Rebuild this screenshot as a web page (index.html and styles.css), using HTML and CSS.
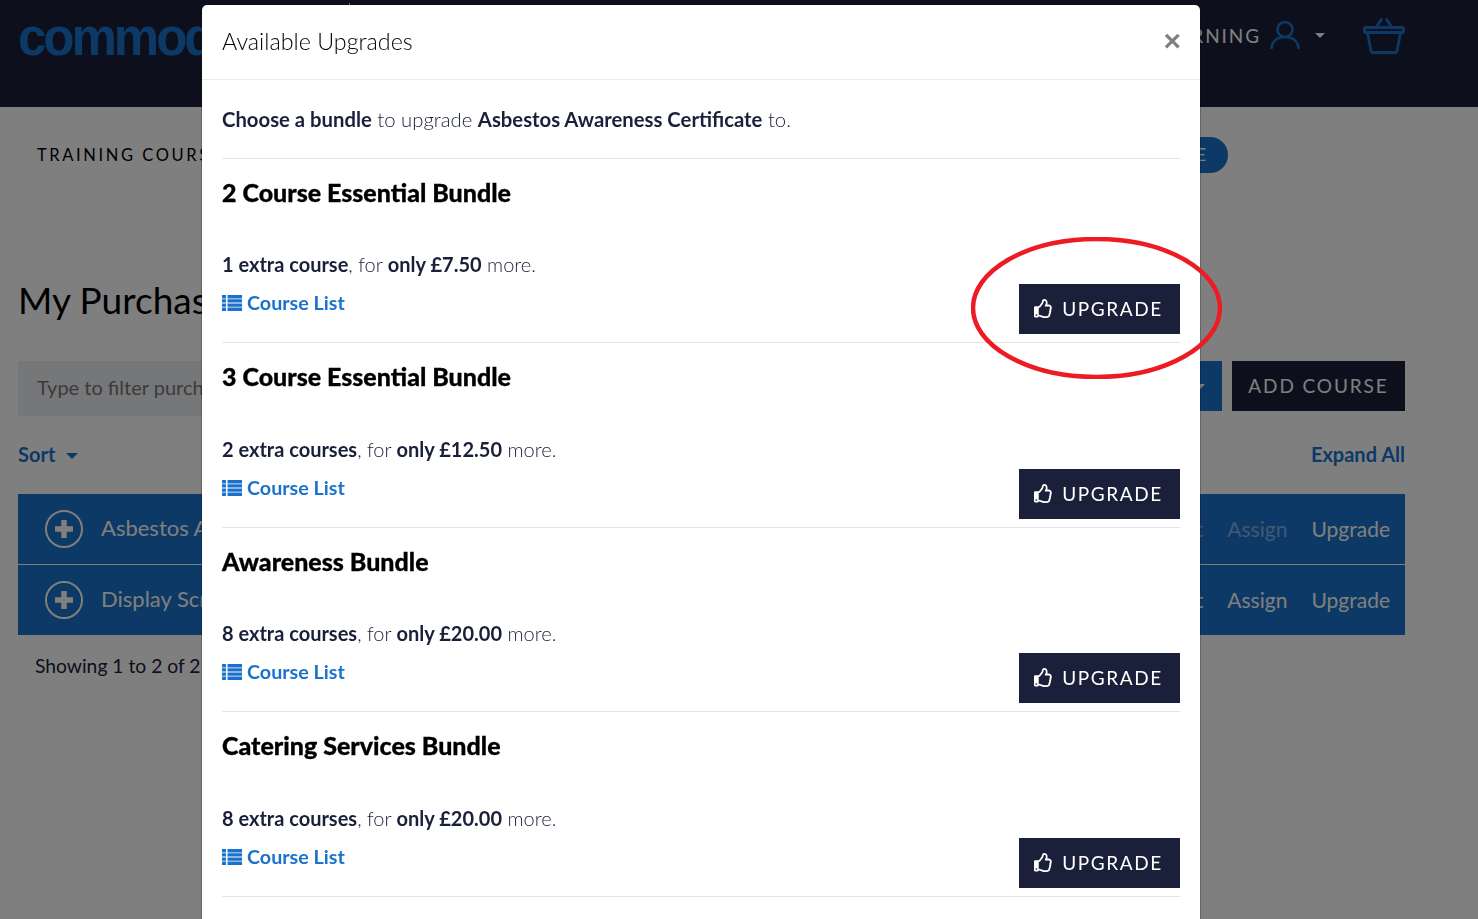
FILE: index.html
```html
<!DOCTYPE html>
<html lang="en">
<head>
<meta charset="utf-8">
<title>My Purchases</title>
<link rel="stylesheet" href="styles.css">
</head>
<body>
<svg class="defs" width="0" height="0">
  <symbol id="thumb" viewBox="0 0 512 512"><path fill="#fff" d="M466.27 286.69C475.04 271.84 480 256 480 236.85c0-44.015-37.218-85.58-85.82-85.58H357.7c4.92-12.81 8.85-28.13 8.85-46.54C366.55 31.936 328.86 0 271.28 0c-61.607 0-58.093 94.933-71.76 108.6-22.747 22.747-49.615 66.447-68.76 83.4H32c-17.673 0-32 14.327-32 32v240c0 17.673 14.327 32 32 32h64c14.893 0 27.408-10.174 30.978-23.95 44.509 1.001 75.06 39.94 177.802 39.94 7.22 0 15.22.01 22.22.01 77.117 0 111.986-39.423 112.94-95.33 13.319-18.425 20.299-43.122 17.34-66.99 9.854-18.451 13.664-40.343 8.99-62.99zm-61.75 53.83c12.56 21.13 1.26 49.41-13.94 57.57 7.7 48.78-17.608 65.9-53.12 65.9h-37.82c-71.639 0-118.029-37.82-171.64-37.82V240h10.92c28.36 0 67.98-70.89 94.54-97.46 28.36-28.36 18.91-75.63 37.82-94.54 47.27 0 47.27 32.98 47.27 56.73 0 39.17-28.36 56.72-28.36 94.54h103.99c21.11 0 37.73 18.91 37.82 37.82.09 18.9-12.82 37.81-21.79 37.81 12.67 13.67 15.39 42.44-3.89 57.72zM88 432c0 13.255-10.745 24-24 24s-24-10.745-24-24 10.745-24 24-24 24 10.745 24 24z"/></symbol>
  <symbol id="list" viewBox="0 0 20 16"><path fill="#1a72cc" d="M0 0h4v3.400H0zM5.500 0H20v3.400H5.500zM0 4.200h4v3.400H0zM5.500 4.200H20v3.400H5.500zM0 8.400h4v3.400H0zM5.500 8.400H20v3.400H5.500zM0 12.600h4V16H0zM5.500 12.600H20V16H5.500z"/></symbol>
  <symbol id="plus" viewBox="0 0 38 38"><circle cx="19" cy="19" r="18" fill="none" stroke="#fff" stroke-width="2"/><path d="M19 10v18M10 19h18" stroke="#fff" stroke-width="5.500"/></symbol>
</svg>
<div class="page">
  <header class="topbar">
    <span class="tick"></span>
    <div class="logo">commodus</div>
    <div class="top-right">
      <span class="top-link">MY LEARNING</span>
      <svg class="user-icon" viewBox="0 0 30 30" width="30" height="30" fill="none" stroke="#1a72cc" stroke-width="2.600"><circle cx="15" cy="9.500" r="7.500"/><path d="M1.500 29c0-7 5-12 13.500-12s13.500 5 13.500 12"/></svg>
      <span class="caret caret-light"></span>
      <svg class="basket-icon" viewBox="0 0 42 37" width="42" height="37" fill="none" stroke="#1a72cc" stroke-width="2.800"><path d="M12 12 19 1.500M30 12 23 1.500"/><rect x="1.500" y="10.500" width="39" height="5" rx="1"/><path d="M4.500 16 8 34c.2 1 1 1.500 2 1.500h22c1 0 1.800-.5 2-1.500l3.500-18"/></svg>
    </div>
  </header>
  <nav class="subnav">
    <span class="subnav-link">TRAINING COURSES</span>
    <span class="pill">MANAGE</span>
  </nav>
  <h1 class="page-title">My Purchases</h1>
  <div class="filter-row">
    <div class="filter-input">Type to filter purchases</div>
    <div class="blue-btn"><span class="caret caret-light"></span></div>
    <div class="add-btn">ADD COURSE</div>
  </div>
  <div class="sort-row">
    <span class="sort">Sort <span class="caret caret-blue"></span></span>
    <span class="expand">Expand All</span>
  </div>
  <div class="course-table">
    <div class="course-row">
      <svg class="plus" width="38" height="38"><use href="#plus"/></svg>
      <span class="course-name">Asbestos Awareness Certificate</span>
      <span class="action action-off">Report</span>
      <span class="action action-off">Assign</span>
      <span class="action">Upgrade</span>
    </div>
    <div class="course-row">
      <svg class="plus" width="38" height="38"><use href="#plus"/></svg>
      <span class="course-name">Display Screen Equipment</span>
      <span class="action">Report</span>
      <span class="action">Assign</span>
      <span class="action">Upgrade</span>
    </div>
  </div>
  <p class="showing">Showing 1 to 2 of 2</p>
</div>

<div class="backdrop"></div>

<div class="modal">
  <div class="modal-head">
    <h2 class="modal-title">Available Upgrades</h2>
    <span class="close">×</span>
  </div>
  <div class="modal-body">
    <p class="intro"><b>Choose a bundle</b> to upgrade <b>Asbestos Awareness Certificate</b> to.</p>

    <section class="bundle">
      <h3 class="bundle-title">2 Course Essential Bundle</h3>
      <div class="bundle-foot">
        <div>
          <p class="offer"><b>1 extra course</b>, for <b>only £7.50</b> more.</p>
          <a class="course-list"><svg class="list-icon" width="20" height="16"><use href="#list"/></svg>Course List</a>
        </div>
        <button class="upgrade"><svg class="thumb" width="19" height="19"><use href="#thumb"/></svg>UPGRADE</button>
      </div>
    </section>

    <section class="bundle">
      <h3 class="bundle-title">3 Course Essential Bundle</h3>
      <div class="bundle-foot">
        <div>
          <p class="offer"><b>2 extra courses</b>, for <b>only £12.50</b> more.</p>
          <a class="course-list"><svg class="list-icon" width="20" height="16"><use href="#list"/></svg>Course List</a>
        </div>
        <button class="upgrade"><svg class="thumb" width="19" height="19"><use href="#thumb"/></svg>UPGRADE</button>
      </div>
    </section>

    <section class="bundle">
      <h3 class="bundle-title">Awareness Bundle</h3>
      <div class="bundle-foot">
        <div>
          <p class="offer"><b>8 extra courses</b>, for <b>only £20.00</b> more.</p>
          <a class="course-list"><svg class="list-icon" width="20" height="16"><use href="#list"/></svg>Course List</a>
        </div>
        <button class="upgrade"><svg class="thumb" width="19" height="19"><use href="#thumb"/></svg>UPGRADE</button>
      </div>
    </section>

    <section class="bundle">
      <h3 class="bundle-title">Catering Services Bundle</h3>
      <div class="bundle-foot">
        <div>
          <p class="offer"><b>8 extra courses</b>, for <b>only £20.00</b> more.</p>
          <a class="course-list"><svg class="list-icon" width="20" height="16"><use href="#list"/></svg>Course List</a>
        </div>
        <button class="upgrade"><svg class="thumb" width="19" height="19"><use href="#thumb"/></svg>UPGRADE</button>
      </div>
    </section>
  </div>
</div>

<svg class="annotation" viewBox="0 0 251 142" width="251" height="142" fill="none"><ellipse cx="125.500" cy="71" rx="123.500" ry="69" stroke="#ed1c24" stroke-width="4.500"/></svg>
</body>
</html>
```

FILE: styles.css
```css
* { box-sizing: border-box; }

html, body {
  margin: 0;
  height: 919px;
  overflow: hidden;
}

body {
  background: #fff;
  color: #1a203a;
  font-family: "Lato", "Liberation Sans", sans-serif;
  font-size: 20px;
}

p, h1, h2, h3 { margin: 0; font-weight: 400; }

.defs { position: absolute; }

.page { height: 919px; overflow: hidden; }

.topbar {
  height: 107px;
  background: #1a2039;
  display: flex;
  justify-content: space-between;
  padding: 8px 73px 0 18px;
}

.tick {
  position: absolute;
  left: 349px;
  top: 3px;
  width: 1px;
  height: 2px;
  background: #fff;
}

.logo {
  font-family: "Liberation Sans", sans-serif;
  font-weight: 700;
  font-size: 51px;
  line-height: 60px;
  letter-spacing: -3px;
  color: #1a72cc;
}

.top-right {
  display: flex;
  align-items: flex-start;
  padding-top: 9px;
}

.top-link {
  font-size: 19px;
  line-height: 24px;
  letter-spacing: 1.900px;
  color: #fff;
  margin-top: 7px;
  margin-right: 9px;
}

.user-icon { margin-top: 3px; }

.basket-icon { margin-left: 38px; }

.caret {
  display: inline-block;
  width: 0;
  height: 0;
  border-left: 5px solid transparent;
  border-right: 5px solid transparent;
}

.caret-light { border-top: 5px solid #fff; }
.caret-blue { border-top: 6px solid #1a72cc; border-left-width: 6px; border-right-width: 6px; margin-left: 6px; vertical-align: 3px; }

.top-right .caret { margin: 16px 0 0 15px; }

.subnav {
  height: 36px;
  margin: 30px 250px 0 37px;
  display: flex;
  justify-content: space-between;
  align-items: center;
}

.subnav-link {
  font-size: 16.500px;
  letter-spacing: 2.600px;
  padding-bottom: 1px;
  color: #000;
}

.pill {
  background: #1a72cc;
  color: #fff;
  height: 36px;
  line-height: 36px;
  padding: 0 20px;
  border-radius: 18px;
  font-size: 17px;
  letter-spacing: 2px;
}

.page-title {
  margin: 102px 0 0 18px;
  font-size: 37px;
  line-height: 50px;
  color: #000;
}

.filter-row {
  display: flex;
  margin: 36px 73px 0 18px;
  align-items: flex-start;
}

.filter-input {
  flex: 1;
  height: 55px;
  background: #ebeef2;
  color: #777;
  padding: 0 19px;
  line-height: 53px;
}

.blue-btn {
  width: 60px;
  height: 50px;
  background: #1a72cc;
  display: flex;
  align-items: center;
  justify-content: flex-end;
  padding-right: 17px;
}

.add-btn {
  width: 173px;
  height: 50px;
  margin-left: 10px;
  background: #1a2039;
  color: #fff;
  font-size: 19px;
  letter-spacing: 1.900px;
  line-height: 50px;
  text-align: center;
}

.sort-row {
  display: flex;
  justify-content: space-between;
  margin: 24px 73px 0 18px;
  height: 28px;
  line-height: 28px;
  font-weight: 700;
  color: #1a72cc;
}

.course-table {
  margin: 26px 73px 0 18px;
  background: #1a72cc;
  color: #fff;
}

.course-row {
  height: 70.500px;
  display: flex;
  align-items: center;
  padding: 0 15px 0 27px;
  border-bottom: 1px solid #fff;
  font-size: 21px;
}

.course-row:last-child { border-bottom: 0; }

.course-name {
  margin-left: 18px;
  margin-right: auto;
  padding-bottom: 2px;
  font-size: 22px;
}

.plus { flex: none; }

.action { margin-left: 24px; }
.action-off { opacity: .45; }

.showing {
  margin: 19px 0 0 35px;
  font-size: 19.300px;
  line-height: 24px;
}

.backdrop {
  position: fixed;
  inset: 0;
  background: rgba(0, 0, 0, .5);
}

.modal {
  position: absolute;
  left: 201px;
  top: 4px;
  width: 1000px;
  height: 960px;
  background: #fff;
  border: 1px solid rgba(0, 0, 0, .2);
  background-clip: padding-box;
  border-radius: 6px;
}

.modal-head {
  height: 75px;
  border-bottom: 1px solid #e9ecef;
  display: flex;
  justify-content: space-between;
  align-items: center;
  padding: 0 20px 2px;
}

.modal-title {
  font-size: 23.300px;
  font-weight: 300;
  color: #000;
}

.close {
  font-family: "Liberation Sans", sans-serif;
  font-weight: 700;
  font-size: 30px;
  line-height: 30px;
  color: #808080;
  margin-right: -1px;
}

.modal-body { padding: 0 20px; }

.intro {
  height: 77.900px;
  line-height: 78px;
  font-size: 20.300px;
  font-weight: 300;
}

.intro b, .offer b { font-weight: 700; }

.bundle {
  height: 184.500px;
  border-top: 1px solid #e3e5e8;
  padding-top: 18px;
}

.bundle:last-child { height: 185.500px; border-bottom: 1px solid #e3e5e8; }

.bundle-title {
  font-size: 25px;
  font-weight: 900;
  line-height: 30px;
  color: #000;
  -webkit-text-stroke: .3px #000;
}

.bundle-foot {
  display: flex;
  justify-content: space-between;
  align-items: flex-end;
  margin-top: 45.300px;
}

.offer {
  font-size: 20px;
  font-weight: 300;
  line-height: 24px;
}

.course-list {
  display: flex;
  align-items: center;
  margin-top: 15px;
  font-size: 19.700px;
  font-weight: 700;
  line-height: 24px;
  color: #1a72cc;
}

.list-icon { margin-right: 5px; }

.upgrade {
  width: 161px;
  height: 50px;
  border: 0;
  padding: 0 2px 1px 0;
  background: #1a203a;
  color: #fff;
  font-family: "Lato", sans-serif;
  font-size: 19px;
  letter-spacing: 1.600px;
  display: flex;
  align-items: center;
  justify-content: center;
  margin-bottom: -19px;
}

.thumb { margin-right: 9px; }

.annotation {
  position: absolute;
  left: 971px;
  top: 237px;
}
```
